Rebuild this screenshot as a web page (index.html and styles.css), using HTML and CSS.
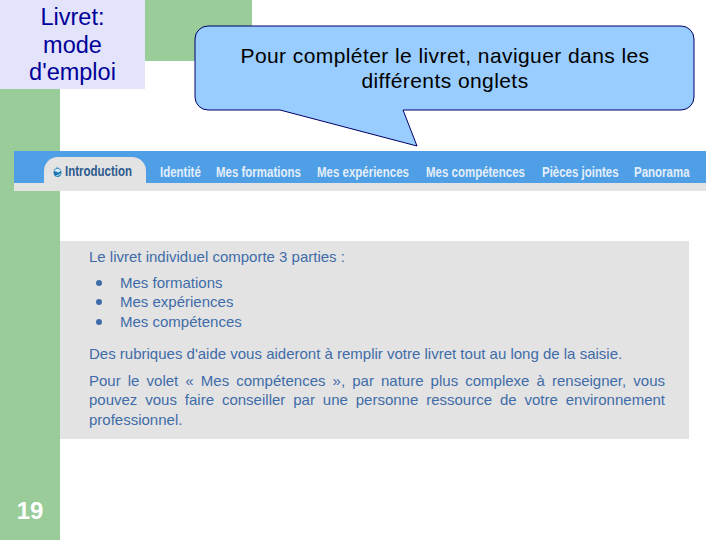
FILE: index.html
```html
<!DOCTYPE html>
<html lang="fr">
<head>
    <meta charset="UTF-8">
    <title>Livret: mode d'emploi</title>
    <link rel="stylesheet" href="styles.css">
</head>
<body>

<div class="slide">
    <div class="top">
        <h1 class="title">Livret: mode d'emploi</h1>
        <div class="callout">
            <svg class="callout-shape" width="502" height="123" viewBox="0 0 502 123">
                <path d="M14 1 H487 A13 13 0 0 1 500 14 V72 A13 13 0 0 1 487 85 H209 L223 121 L86 85 H14 A13 13 0 0 1 1 72 V14 A13 13 0 0 1 14 1 Z" fill="#99ccff" stroke="#000066" stroke-width="1"/>
            </svg>
            <p class="callout-text">Pour compléter le livret, naviguer dans les différents onglets</p>
        </div>
    </div>

    <div class="tabs">
        <div class="tab-row">
            <div class="tab active">
                <svg class="tab-icon" width="9" height="12" viewBox="0 0 9 12">
                    <ellipse cx="4.5" cy="6.5" rx="4" ry="4.5" fill="#1f78b4"/>
                    <path d="M1 5 Q4 1 8 4.5 L5.5 6.5 Q3 5 1 5 Z" fill="#dcecf4"/>
                    <path d="M3 10 Q6 9.5 7.6 7.5" stroke="#a6d8ee" stroke-width="1.2" fill="none"/>
                    <path d="M4 0.5 L6 2.5 L3 2.5 Z" fill="#5aa5d0"/>
                </svg>
                <span class="tab-label">Introduction</span>
            </div>
            <div class="tab"><span class="tab-label">Identité</span></div>
            <div class="tab"><span class="tab-label">Mes formations</span></div>
            <div class="tab"><span class="tab-label">Mes expériences</span></div>
            <div class="tab"><span class="tab-label">Mes compétences</span></div>
            <div class="tab"><span class="tab-label">Pièces jointes</span></div>
            <div class="tab"><span class="tab-label">Panorama</span></div>
        </div>
        <div class="tab-base"></div>
    </div>

    <div class="panel">
        <p class="lead">Le livret individuel comporte 3 parties :</p>
        <ul class="parts">
            <li>Mes formations</li>
            <li>Mes expériences</li>
            <li>Mes compétences</li>
        </ul>
        <p class="help">Des rubriques d'aide vous aideront à remplir votre livret tout au long de la saisie.</p>
        <p class="note">Pour le volet « Mes compétences », par nature plus complexe à renseigner, vous pouvez vous faire conseiller par une personne ressource de votre environnement professionnel.</p>
    </div>

    <div class="page-num">19</div>
</div>

</body>
</html>
```

FILE: styles.css
```css
body {
    margin: 0;
    font-family: "Liberation Sans", Arial, sans-serif;
    background-color: #fff;
}
.slide {
    position: relative;
    width: 720px;
    height: 540px;
    overflow: hidden;
    background-image: linear-gradient(#99cc99, #99cc99), linear-gradient(#99cc99, #99cc99);
    background-size: 60px 100%, 252px 61px;
    background-repeat: no-repeat;
}
.top {
    display: flex;
    height: 151px;
}
.title {
    width: 145px;
    height: 89px;
    margin: 0;
    padding: 4px 26px 0;
    box-sizing: border-box;
    background-color: #e3e3fb;
    color: #000099;
    font-size: 23.5px;
    font-weight: normal;
    line-height: 27.5px;
    text-align: center;
}
.callout {
    position: relative;
    width: 500px;
    height: 85px;
    margin: 26px 0 0 50px;
}
.callout-shape {
    position: absolute;
    left: -1px;
    top: -1px;
}
.callout-text {
    position: relative;
    margin: 0;
    padding: 17px 30px 0;
    font-size: 21px;
    line-height: 25px;
    letter-spacing: 0.42px;
    text-align: center;
    color: #000;
}
.tabs {
    width: 692px;
    margin-left: 14px;
}
.tab-row {
    display: grid;
    grid-template-columns: 99px 39px 84px 92px 99px 75px 56px;
    column-gap: 17px;
    align-items: end;
    height: 32px;
    padding-left: 30px;
    box-sizing: border-box;
    background-color: #4f9fe6;
}
.tab {
    height: 26px;
    line-height: 30px;
    font-size: 14px;
    font-weight: bold;
    color: #e3eefa;
    white-space: nowrap;
}
/* no narrow font here, so the labels are squeezed sideways */
.tab-label {
    display: inline-block;
    transform: scaleX(0.82);
    transform-origin: left center;
}
.tab.active {
    display: flex;
    align-items: center;
    gap: 3px;
    margin-right: -3px;
    padding: 3px 0 0 9px;
    box-sizing: border-box;
    line-height: 23px;
    border-radius: 14px 14px 0 0;
    background-color: #e3e3e3;
    color: #2d5a8e;
}
.tab-icon {
    flex: none;
}
.tab-base {
    height: 8px;
    background-color: #e3e3e3;
}
.panel {
    width: 629px;
    height: 198px;
    margin: 50px 0 0 60px;
    padding: 6px 24px 0 29px;
    box-sizing: border-box;
    background-color: #e3e3e3;
    color: #3f6ca8;
    font-size: 15px;
    line-height: 19.5px;
}
.panel p {
    margin: 0;
}
.parts {
    list-style: none;
    margin: 6px 0 13px;
    padding: 0;
}
.parts li {
    position: relative;
    padding-left: 31px;
}
.parts li::before {
    content: "";
    position: absolute;
    left: 7px;
    top: 7px;
    width: 6px;
    height: 6px;
    border-radius: 50%;
    background-color: #3f6ca8;
}
.panel .help {
    margin-bottom: 7px;
}
.note {
    text-align: justify;
}
.page-num {
    position: absolute;
    left: 0;
    bottom: 15px;
    width: 60px;
    text-align: center;
    font-size: 24px;
    font-weight: bold;
    color: #fff;
}
```
